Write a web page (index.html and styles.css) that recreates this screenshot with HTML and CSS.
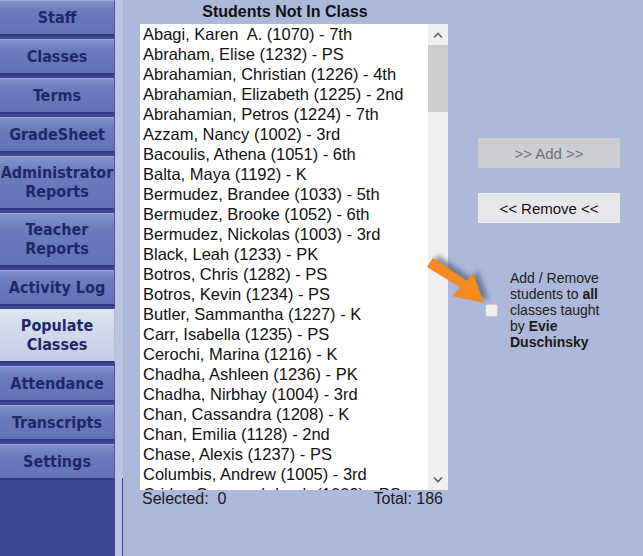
FILE: index.html
```html
<!DOCTYPE html>
<html lang="en">
<head>
  <meta charset="UTF-8">
  <title>Populate Classes</title>
  <link rel="stylesheet" href="styles.css">
</head>
<body>

<div class="app">
  <!-- Left navigation -->
  <nav class="sidebar">
    <div class="nav-btn">Staff</div>
    <div class="nav-btn">Classes</div>
    <div class="nav-btn">Terms</div>
    <div class="nav-btn">GradeSheet</div>
    <div class="nav-btn tall">Administrator<br>Reports</div>
    <div class="nav-btn tall">Teacher<br>Reports</div>
    <div class="nav-btn">Activity Log</div>
    <div class="nav-btn tall active">Populate<br>Classes</div>
    <div class="nav-btn">Attendance</div>
    <div class="nav-btn">Transcripts</div>
    <div class="nav-btn">Settings</div>
  </nav>
  <div class="divider"></div>

  <main class="content">
    <!-- Students list -->
    <section class="list-panel">
      <div class="list-title">Students Not In Class</div>
      <div class="listbox">
        <div class="items">
          <div class="item">Abagi, Karen  A. (1070) - 7th</div>
          <div class="item">Abraham, Elise (1232) - PS</div>
          <div class="item">Abrahamian, Christian (1226) - 4th</div>
          <div class="item">Abrahamian, Elizabeth (1225) - 2nd</div>
          <div class="item">Abrahamian, Petros (1224) - 7th</div>
          <div class="item">Azzam, Nancy (1002) - 3rd</div>
          <div class="item">Bacoulis, Athena (1051) - 6th</div>
          <div class="item">Balta, Maya (1192) - K</div>
          <div class="item">Bermudez, Brandee (1033) - 5th</div>
          <div class="item">Bermudez, Brooke (1052) - 6th</div>
          <div class="item">Bermudez, Nickolas (1003) - 3rd</div>
          <div class="item">Black, Leah (1233) - PK</div>
          <div class="item">Botros, Chris (1282) - PS</div>
          <div class="item">Botros, Kevin (1234) - PS</div>
          <div class="item">Butler, Sammantha (1227) - K</div>
          <div class="item">Carr, Isabella (1235) - PS</div>
          <div class="item">Cerochi, Marina (1216) - K</div>
          <div class="item">Chadha, Ashleen (1236) - PK</div>
          <div class="item">Chadha, Nirbhay (1004) - 3rd</div>
          <div class="item">Chan, Cassandra (1208) - K</div>
          <div class="item">Chan, Emilia (1128) - 2nd</div>
          <div class="item">Chase, Alexis (1237) - PS</div>
          <div class="item">Columbis, Andrew (1005) - 3rd</div>
          <div class="item">Crider, Savannah Leah (1009) - PS</div>
        </div>
        <div class="scrollbar">
          <div class="scroll-arrow">
            <svg width="12" height="8" viewBox="0 0 12 8"><path d="M2 6.5 L6 2.5 L10 6.5" fill="none" stroke="#606060" stroke-width="1.6"/></svg>
          </div>
          <div class="scroll-thumb"></div>
          <div class="scroll-track"></div>
          <div class="scroll-arrow">
            <svg width="12" height="8" viewBox="0 0 12 8"><path d="M2 1.5 L6 5.5 L10 1.5" fill="none" stroke="#606060" stroke-width="1.6"/></svg>
          </div>
        </div>
      </div>
      <div class="list-footer">
        <span class="selected">Selected:  0</span>
        <span>Total: 186</span>
      </div>
    </section>

    <!-- Add / remove controls -->
    <section class="actions">
      <button class="action-btn" disabled>&gt;&gt; Add &gt;&gt;</button>
      <button class="action-btn remove">&lt;&lt; Remove &lt;&lt;</button>
      <label class="all-classes">
        <input type="checkbox">
        <span>Add / Remove<br>students to <b>all</b><br>classes taught<br>by <b>Evie<br>Duschinsky</b></span>
      </label>
    </section>
  </main>
</div>

<!-- orange pointer arrow -->
<svg class="pointer" width="80" height="66" viewBox="0 0 80 66">
  <defs>
    <filter id="blur" x="-30%" y="-30%" width="160%" height="160%">
      <feGaussianBlur stdDeviation="2.5"/>
    </filter>
  </defs>
  <g transform="translate(5,-3)" filter="url(#blur)" opacity="0.6" fill="#4a4f66">
    <polygon points="13,8 47,31 53,23 64,53 32,46 41,38 7,17"/>
  </g>
  <polygon points="13,8 47,31 53,23 64,53 32,46 41,38 7,17" fill="#f78a1e"/>
</svg>

</body>
</html>
```

FILE: styles.css
```css
body {
  margin: 0;
  font-family: "Liberation Sans", Arial, sans-serif;
  background-color: #adb9db;
  overflow: hidden;
}
.app {
  display: flex;
  height: 556px;
}
.sidebar {
  width: 115px;
  background-color: #3b4694;
  display: flex;
  flex-direction: column;
  gap: 3px;
}
.nav-btn {
  height: 36px;
  box-sizing: border-box;
  display: flex;
  align-items: center;
  justify-content: center;
  text-align: center;
  font-family: "DejaVu Sans Condensed", "DejaVu Sans", sans-serif;
  font-stretch: condensed;
  font-weight: bold;
  font-size: 16px;
  line-height: 19px;
  color: #1e2768;
  background: linear-gradient(#8795cd, #6c7cbd 30%, #6272b5);
  border-bottom: 2px solid #2e3982;
  border-right: 1px solid #4b57a0;
  box-shadow: inset 0 1px 0 #a0acdb;
}
.nav-btn.tall {
  height: 54px;
}
.nav-btn.active {
  background: linear-gradient(#dfe4f2, #c3cbe6);
  box-shadow: none;
  border-right-color: #b3bcdc;
}
.divider {
  width: 8px;
  background-color: #bac4e3;
  position: relative;
}
.divider::after {
  content: "";
  position: absolute;
  right: 0;
  top: 478px;
  bottom: 0;
  width: 1px;
  background-color: #3b4694;
}
.content {
  flex: 1;
  display: flex;
  padding-left: 17px;
}
.list-panel {
  width: 308px;
  display: flex;
  flex-direction: column;
}
.list-title {
  height: 24px;
  line-height: 24px;
  text-align: center;
  padding-right: 18px;
  font-weight: bold;
  font-size: 16px;
  color: #111;
}
.listbox {
  height: 466px;
  background-color: #fff;
  display: flex;
}
.items {
  flex: 1;
  overflow: hidden;
  padding-left: 3px;
  font-size: 16.5px;
  line-height: 20px;
  color: #111;
}
.item {
  white-space: pre;
}
.scrollbar {
  width: 20px;
  background-color: #f0f0f0;
  display: flex;
  flex-direction: column;
}
.scroll-arrow {
  height: 21px;
  display: flex;
  align-items: center;
  justify-content: center;
}
.scroll-thumb {
  height: 67px;
  background-color: #cdcdcd;
}
.scroll-track {
  flex: 1;
}
.list-footer {
  display: flex;
  justify-content: space-between;
  padding: 0 5px 0 2px;
  font-size: 16px;
  line-height: 18px;
  color: #1a1a1a;
}
.selected {
  white-space: pre;
}
.actions {
  width: 142px;
  margin-left: 30px;
  padding-top: 138px;
  display: flex;
  flex-direction: column;
}
.action-btn {
  height: 30px;
  border: none;
  font-family: "Liberation Sans", Arial, sans-serif;
  font-size: 15px;
  color: #111;
  background-color: #e7e7ea;
  padding: 0;
}
.action-btn:disabled {
  background-color: #cdced3;
  color: #6f6f72;
}
.action-btn.remove {
  margin-top: 25px;
}
.all-classes {
  margin-top: 47px;
  display: flex;
  align-items: center;
  font-size: 14px;
  line-height: 16px;
  color: #1a1a1a;
}
.all-classes input {
  appearance: none;
  width: 13px;
  height: 13px;
  margin: 0 12px 0 7px;
  border: 1px solid #c6c8cf;
  border-radius: 2px;
  background-color: #eeeef1;
  box-sizing: border-box;
}
.pointer {
  position: absolute;
  left: 420px;
  top: 250px;
}
```
